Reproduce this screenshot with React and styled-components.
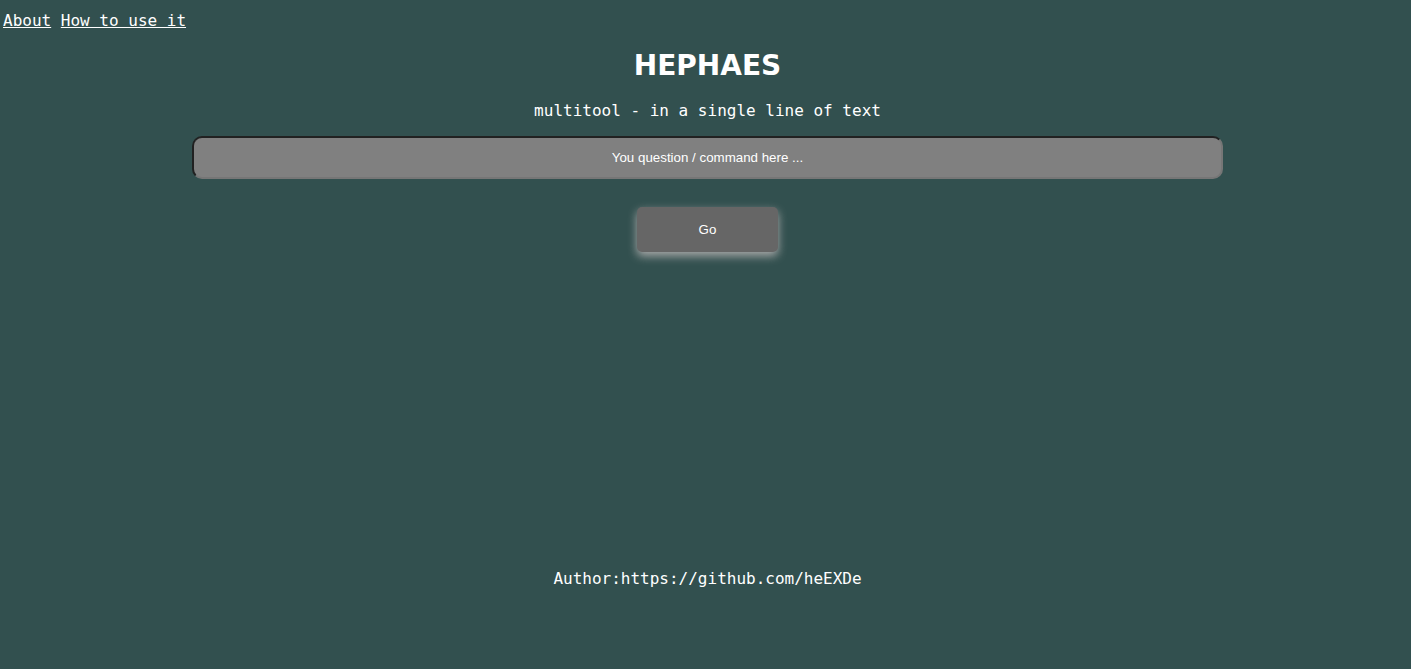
import React from "react";
import styled, { createGlobalStyle } from "styled-components";

const GlobalStyle = createGlobalStyle`
  body {
    margin: 0;
    background: #32504f;
    color: #fff;
    font: 16px/20px "DejaVu Sans Mono", monospace;
  }
`;

const Page = styled.div`
  min-height: 100vh;
  display: flex;
  flex-direction: column;
`;

const Nav = styled.nav`
  padding: 11px 3px 0;
`;

const NavLink = styled.a`
  color: inherit;
  text-decoration: underline;
`;

const Main = styled.main`
  padding-left: 4px;
  display: flex;
  flex-direction: column;
  align-items: center;
`;

const Title = styled.h1`
  margin: 19px 0 0;
  font: bold 28px/32px "DejaVu Sans", sans-serif;
`;

const Tagline = styled.p`
  margin: 19px 0 15px;
`;

const CommandForm = styled.form`
  width: 100%;
  display: flex;
  flex-direction: column;
  align-items: center;
  gap: 28px;
`;

const CommandInput = styled.input`
  box-sizing: border-box;
  width: 73vw;
  height: 43px;
  padding: 0 12px;
  border: 2px inset #767676;
  border-radius: 10px;
  background: #808080;
  color: #fff;
  font-family: "Liberation Sans", Arial, sans-serif;
  text-align: center;

  &::placeholder {
    color: #fff;
    opacity: 1;
  }
`;

const GoButton = styled.button`
  width: 10vw;
  height: 45px;
  border: 0;
  border-radius: 5px;
  background: #666;
  color: #fff;
  font-family: "Liberation Sans", Arial, sans-serif;
  box-shadow: 0 4px 10px #a9a9a9;
  cursor: pointer;
`;

const Footer = styled.footer`
  margin-top: auto;
  padding: 20px 0 80px 4px;
  text-align: center;
`;

export default function App() {
  return (
    <>
      <GlobalStyle />
      <Page>
        <Nav>
          <NavLink href="#about">About</NavLink>{" "}
          <NavLink href="#how-to-use">How to use it</NavLink>
        </Nav>
        <Main>
          <Title>HEPHAES</Title>
          <Tagline>multitool - in a single line of text</Tagline>
          <CommandForm onSubmit={(event) => event.preventDefault()}>
            <CommandInput
              type="text"
              aria-label="Question or command"
              placeholder="You question / command here ..."
            />
            <GoButton type="submit">Go</GoButton>
          </CommandForm>
        </Main>
        <Footer>Author:https://github.com/heEXDe</Footer>
      </Page>
    </>
  );
}
